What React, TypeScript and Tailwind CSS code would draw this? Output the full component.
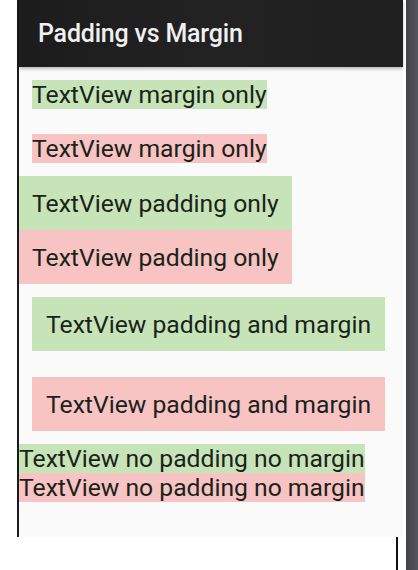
const green = "bg-[#c6e4b8]";
const red = "bg-[#f7c3c3]";

const Row = ({ color, className, children }: { color: string; className: string; children: React.ReactNode }) => (
    <div className={`self-start ${color} ${className} text-[24.7px] leading-[29px] text-[#1a221a] whitespace-nowrap`}>
        {children}
    </div>
);

export default function App() {
    return (
        <div className="flex h-[570px] w-[418px] bg-white" style={{ fontFamily: "Roboto, 'Noto Sans', sans-serif" }}>
            <div className="w-[17px] shrink-0" />
            <div className="flex w-[386px] shrink-0 flex-col">
                <div className="flex h-[537px] flex-col border-l-2 border-[#1a1a1a] bg-[#fafafa]">
                    <div className="flex h-[67px] shrink-0 items-center bg-gradient-to-r from-[#1c1c1c] via-[#222] to-[#1f1f1f] pl-[19px] pt-[1px] shadow-[0_2px_3px_rgba(0,0,0,0.25)]">
                        <span className="text-[25px] font-medium tracking-[-0.2px] text-[#f0f0f0]">Padding vs Margin</span>
                    </div>
                    <div className="flex flex-col">
                        <Row color={green} className="mx-[13px] mt-[13px] mb-[12px]">TextView margin only</Row>
                        <Row color={red} className="mx-[13px] mt-[13px] mb-[13px]">TextView margin only</Row>
                        <Row color={green} className="px-[13px] pt-[13px] pb-[12px]">TextView padding only</Row>
                        <Row color={red} className="px-[13px] pt-[13px] pb-[12px]">TextView padding only</Row>
                        <Row color={green} className="m-[13px] px-[14px] pt-[13px] pb-[12px]">TextView padding and margin</Row>
                        <Row color={red} className="m-[13px] px-[14px] pt-[13px] pb-[12px]">TextView padding and margin</Row>
                        <Row color={green} className="">TextView no padding no margin</Row>
                        <Row color={red} className="">TextView no padding no margin</Row>
                    </div>
                </div>
                <div className="flex flex-1 justify-end pr-[5px]">
                    <div className="w-[2px] bg-[#111]" />
                </div>
            </div>
            <div className="w-[3px] shrink-0" />
            <div className="flex-1 bg-gradient-to-r from-[#3f4449] to-[#50565c]" />
        </div>
    );
}
